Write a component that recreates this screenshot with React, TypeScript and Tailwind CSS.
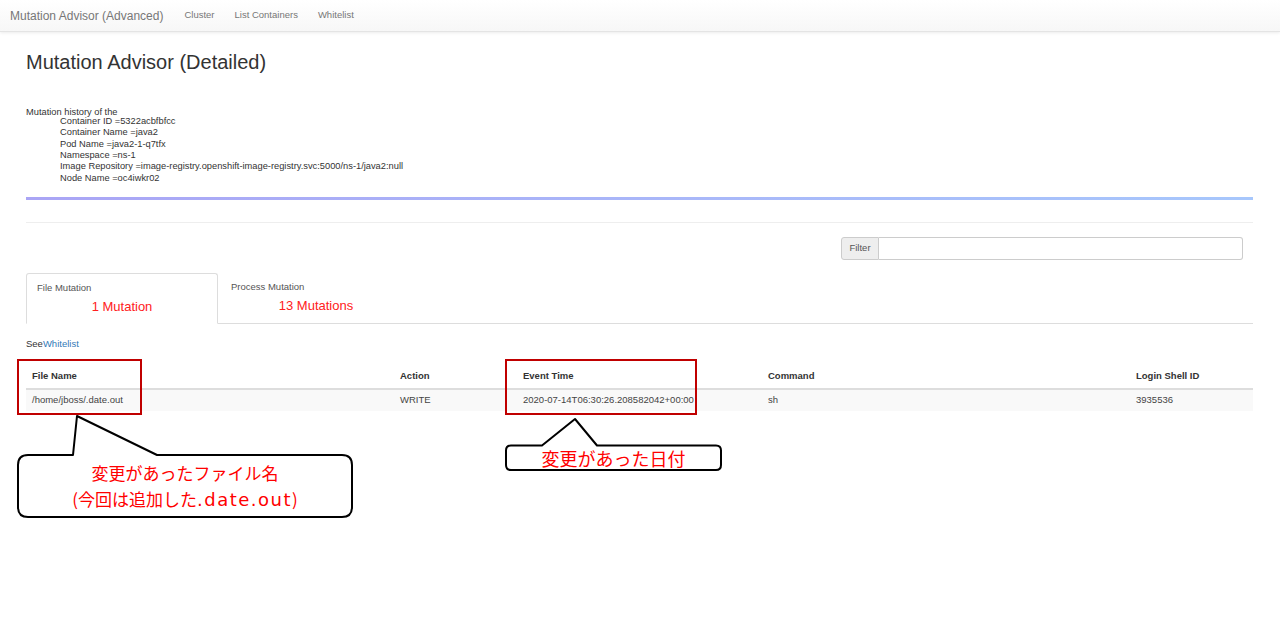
import React from "react";

const details = [
  "Container ID =5322acbfbfcc",
  "Container Name =java2",
  "Pod Name =java2-1-q7tfx",
  "Namespace =ns-1",
  "Image Repository =image-registry.openshift-image-registry.svc:5000/ns-1/java2:null",
  "Node Name =oc4iwkr02",
];

const columns = [
  { label: "File Name", width: "w-[368px]" },
  { label: "Action", width: "w-[123px]" },
  { label: "Event Time", width: "w-[245px]" },
  { label: "Command", width: "w-[368px]" },
  { label: "Login Shell ID", width: "w-[123px]" },
];

const rows = [["/home/jboss/.date.out", "WRITE", "2020-07-14T06:30:26.208582042+00:00", "sh", "3935536"]];

const Navbar = () => (
  <div className="h-[32px] flex items-center px-[10px] bg-linear-to-b from-white to-[#f7f7f7] border-b border-[#e4e4e4] shadow-[0_1px_3px_rgba(0,0,0,0.08)]">
    <span className="text-[12px] text-[#777]">Mutation Advisor (Advanced)</span>
    <div className="flex gap-[20px] ml-[21px] text-[9.5px] text-[#777]">
      <span>Cluster</span>
      <span>List Containers</span>
      <span>Whitelist</span>
    </div>
  </div>
);

const Callouts = () => (
  <>
    {/* red highlight boxes */}
    <div className="absolute left-[17px] top-[359px] w-[125px] h-[56px] border-2 border-[#c00000]" />
    <div className="absolute left-[505px] top-[359px] w-[192px] h-[56px] border-2 border-[#c00000]" />

    <svg className="absolute left-0 top-0" width="1280" height="644" viewBox="0 0 1280 644">
      <path
        d="M73 455 L77 416 L157 455 L342 455 Q352 455 352 465 L352 507 Q352 517 342 517 L28 517 Q18 517 18 507 L18 465 Q18 455 28 455 Z"
        fill="white"
        stroke="black"
        strokeWidth="2"
        strokeLinejoin="round"
      />
      <path
        d="M542 445.5 L575 419 L597 445.5 L716 445.5 Q721 445.5 721 450.5 L721 465 Q721 470 716 470 L511 470 Q506 470 506 465 L506 450.5 Q506 445.5 511 445.5 Z"
        fill="white"
        stroke="black"
        strokeWidth="2"
        strokeLinejoin="round"
      />
    </svg>

    <div className="absolute left-[18px] top-[455px] w-[334px] h-[62px] flex flex-col items-center justify-center text-[#ff0000] text-[17px] leading-[26px] font-['Noto_Sans_CJK_JP',sans-serif]">
      <span>変更があったファイル名</span>
      <span>
        (今回は追加した<span className="text-[18px] font-['DejaVu_Sans','Noto_Sans_CJK_JP',sans-serif] tracking-[1.5px]">.date.out</span>)
      </span>
    </div>
    <div className="absolute left-[506px] top-[445px] w-[215px] h-[25px] flex items-center justify-center text-[#ff0000] text-[18px] leading-[22px] font-['Noto_Sans_CJK_JP',sans-serif]">
      変更があった日付
    </div>
  </>
);

export default function App() {
  return (
    <div className="relative w-[1280px] h-[644px] overflow-hidden bg-white text-[#333] font-['Liberation_Sans',Arial,sans-serif]">
      <Navbar />

      <div className="pl-[26px] pr-[27px]">
        <h1 className="pt-[19px] text-[20px] leading-[22px] text-[#333]">Mutation Advisor (Detailed)</h1>

        <div className="mt-[34px] text-[9.3px] leading-[11.35px] text-[#333]">
          <div className="h-[9px]">Mutation history of the</div>
          {details.map((d) => (
            <div key={d} className="pl-[34px]">
              {d}
            </div>
          ))}
        </div>

        <div className="mt-[13px] h-[3px] bg-linear-to-r from-[#aaa5f5] to-[#a7c7fc]" />
        <div className="mt-[22px] h-px bg-[#eee]" />

        {/* filter */}
        <div className="mt-[14px] flex justify-end pr-[10px]">
          <div className="flex w-[402px] h-[23px]">
            <span className="w-[38px] flex items-center justify-center bg-[#eee] border border-[#ccc] rounded-l-[3px] text-[9.5px] text-[#555]">
              Filter
            </span>
            <div className="flex-1 border border-l-0 border-[#ccc] rounded-r-[3px] bg-white" />
          </div>
        </div>

        {/* tabs */}
        <div className="mt-[13px] flex border-b border-[#ddd]">
          <div className="-mb-px w-[192px] h-[51px] bg-white border border-[#ddd] border-b-white rounded-t-[3px] pt-[8px]">
            <div className="pl-[10px] text-[9.5px] leading-[11px] text-[#555]">File Mutation</div>
            <div className="mt-[6px] text-center text-[13px] leading-[15px] text-[#ff2020]">1 Mutation</div>
          </div>
          <div className="w-[196px] h-[50px] pt-[8px]">
            <div className="pl-[13px] text-[9.5px] leading-[11px] text-[#555]">Process Mutation</div>
            <div className="mt-[6px] text-center text-[13px] leading-[15px] text-[#ff2020]">13 Mutations</div>
          </div>
        </div>

        <div className="mt-[14px] text-[9.5px] leading-[11px]">
          <span className="text-[#333]">See</span>
          <span className="text-[#337ab7]">Whitelist</span>
        </div>

        {/* table */}
        <table className="mt-[15px] w-full border-collapse text-[9.5px]">
          <thead>
            <tr className="border-b-2 border-[#ddd]">
              {columns.map((c) => (
                <th key={c.label} className={`${c.width} h-[25px] pl-[6px] text-left font-bold text-[#333] align-middle`}>
                  {c.label}
                </th>
              ))}
            </tr>
          </thead>
          <tbody>
            {rows.map((r) => (
              <tr key={r[0]} className="bg-[#f9f9f9]">
                {r.map((cell, i) => (
                  <td key={i} className="h-[22px] pl-[6px] text-[#444] align-middle">
                    {cell}
                  </td>
                ))}
              </tr>
            ))}
          </tbody>
        </table>
      </div>

      <Callouts />
    </div>
  );
}
